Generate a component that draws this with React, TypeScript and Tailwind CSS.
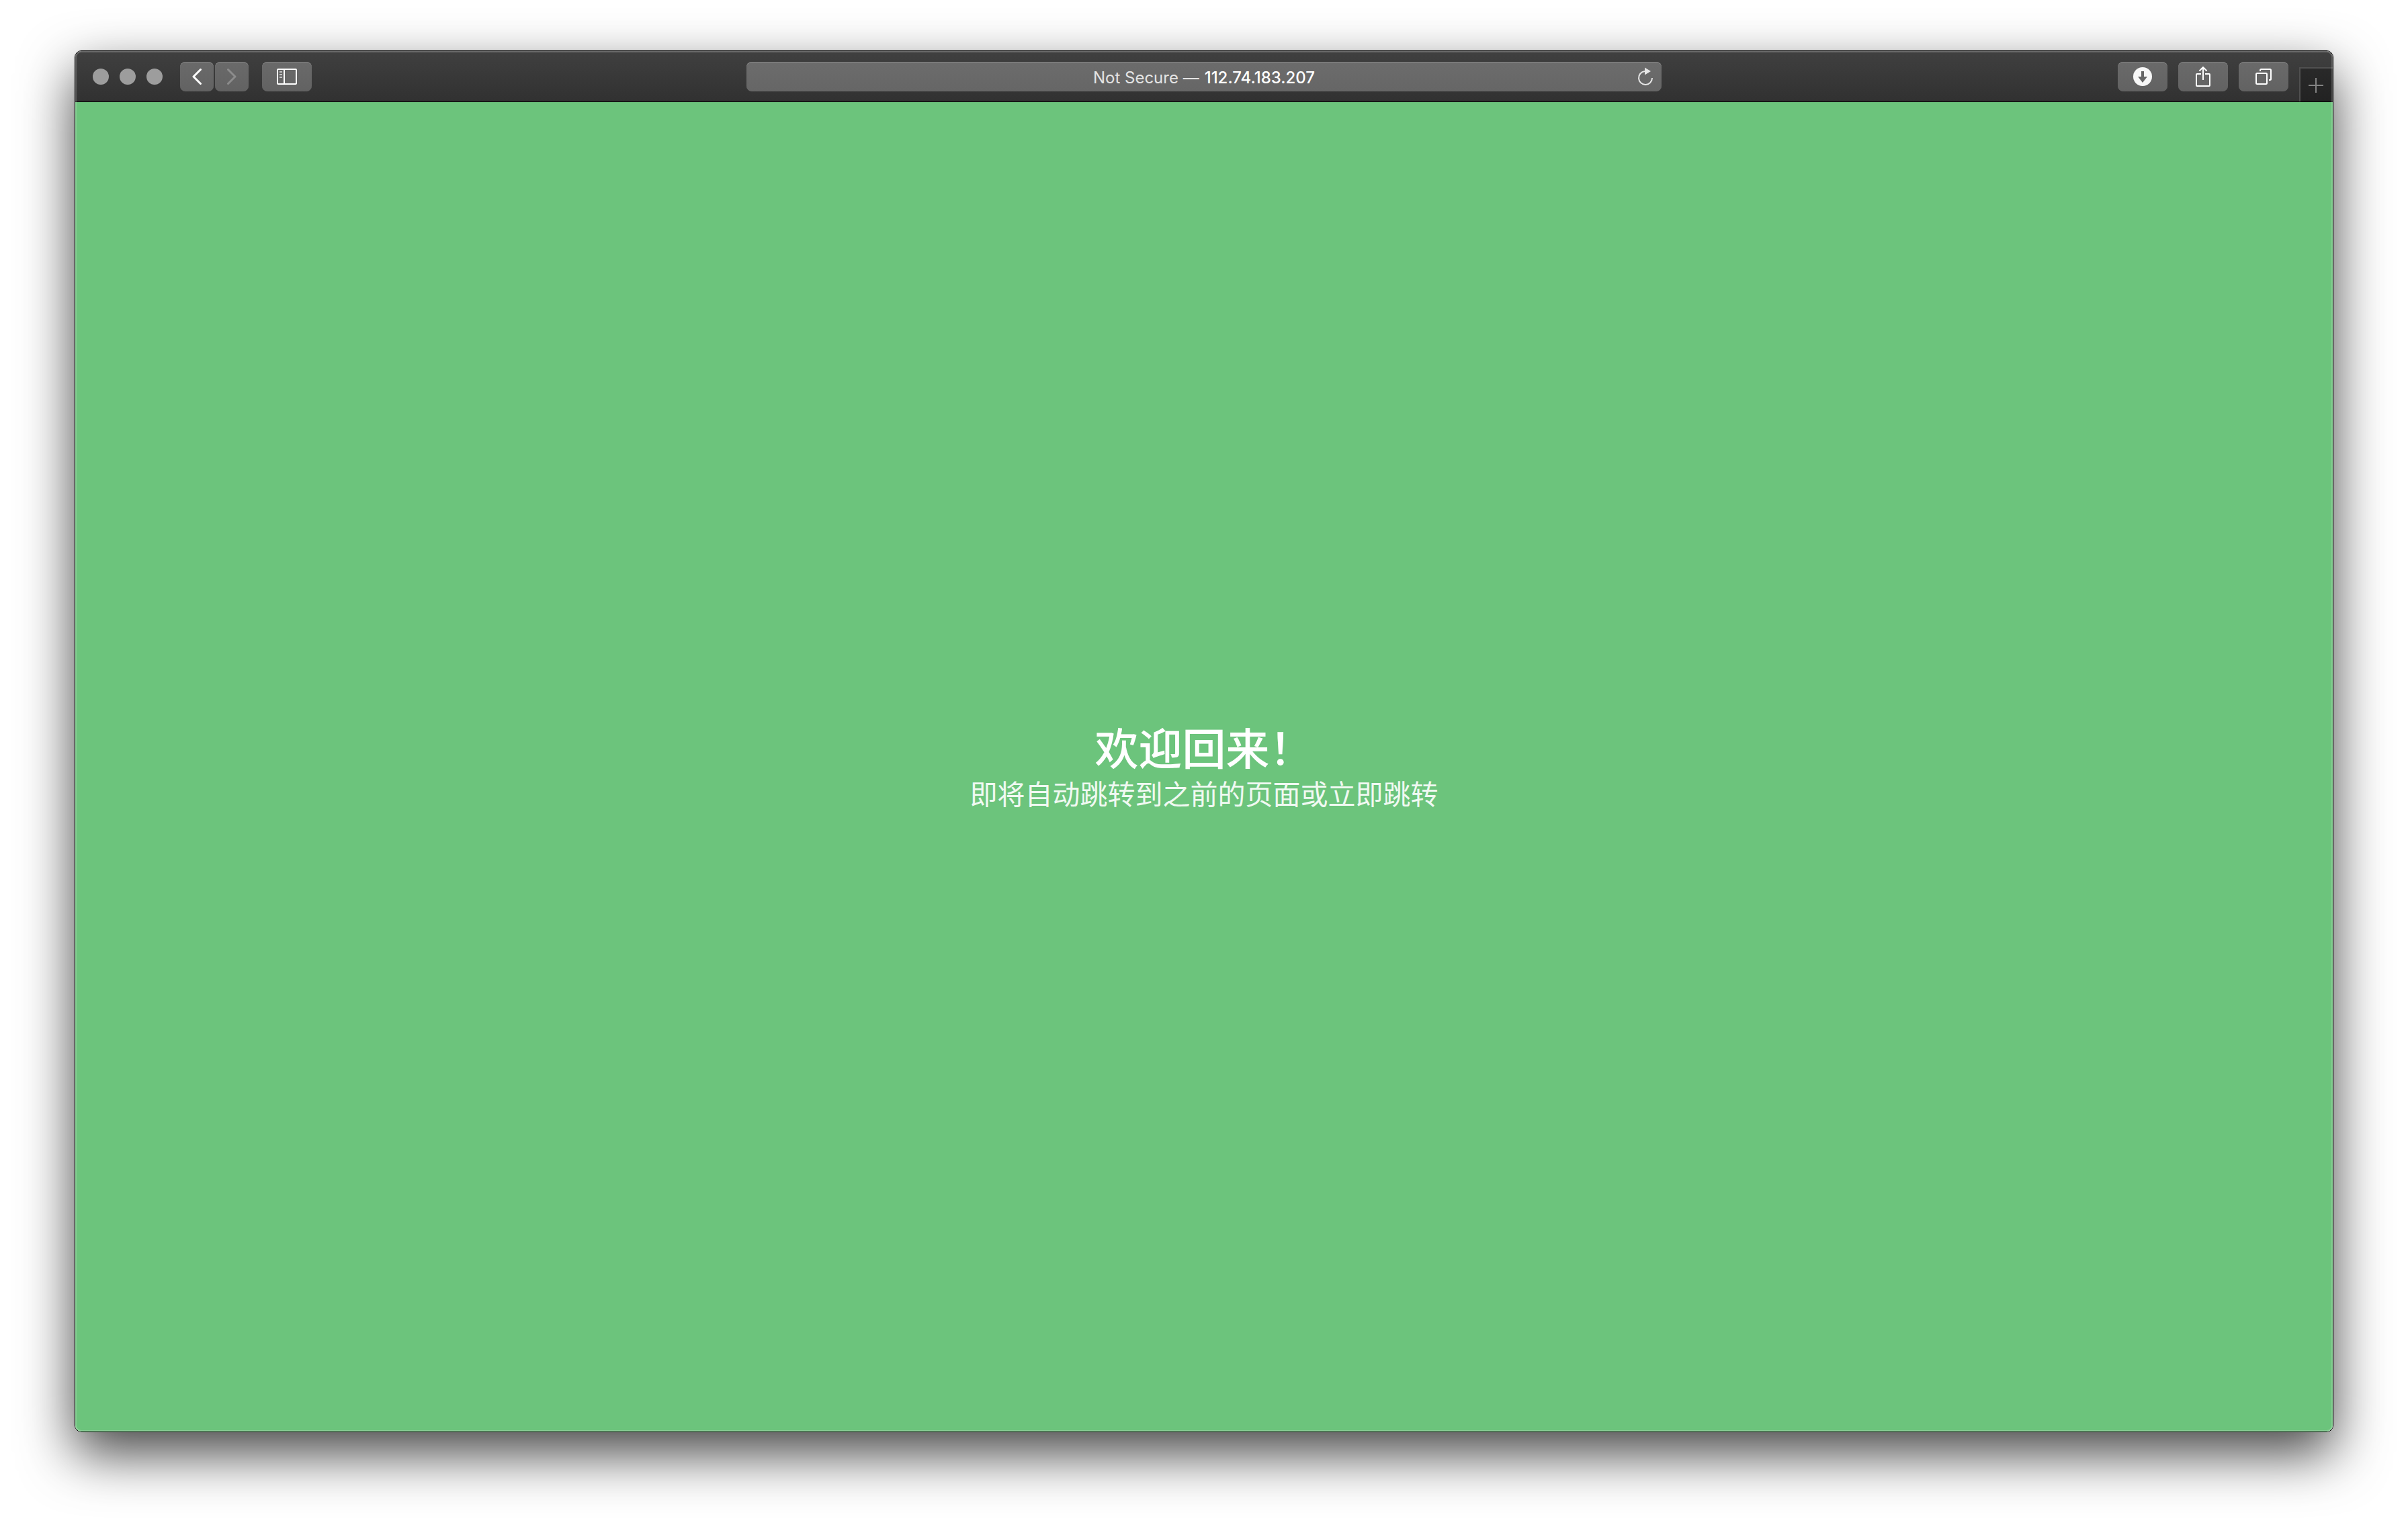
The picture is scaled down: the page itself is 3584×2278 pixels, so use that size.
import type { ReactNode } from "react";

const face =
  "flex h-11 items-center justify-center rounded-[8px] bg-linear-to-b from-[#6a6a6a] to-[#626262] shadow-[inset_0_1px_0_#828282]";

function ToolButton({ label, wide, disabled, children }: { label: string; wide?: boolean; disabled?: boolean; children: ReactNode }) {
  return (
    <button type="button" aria-label={label} disabled={disabled} className={`${face} ${wide ? "w-[74px]" : "w-[50px]"}`}>
      {children}
    </button>
  );
}

function TrafficLights() {
  return (
    <div className="flex gap-4">
      {["Close", "Minimize", "Zoom"].map((name) => (
        <button key={name} type="button" aria-label={name} className="size-6 rounded-full bg-[#9d9d9d]" />
      ))}
    </div>
  );
}

function AddressBar() {
  return (
    <form className="grid h-11 grid-cols-[1fr_auto_1fr] items-center rounded-[8px] bg-linear-to-b from-[#6c6c6c] to-[#666666] px-3 text-[24px] leading-8 shadow-[inset_0_1px_0_#888888]">
      <span />
      <div className="flex items-center gap-2 pt-1">
        <label htmlFor="address" className="text-[#e4e4e4]">
          Not Secure —
        </label>
        <input
          id="address"
          type="text"
          defaultValue="112.74.183.207"
          className="field-sizing-content bg-transparent font-medium text-white outline-none"
        />
      </div>
      <button type="button" aria-label="Reload" className="justify-self-end">
        <svg width="24" height="28" viewBox="0 0 24 28" fill="none">
          <path d="M11 6A10 10 0 1 0 22 16" stroke="#e6e6e6" strokeWidth="2" />
          <path d="M11 0.400V11.600L20 6Z" fill="#e6e6e6" />
        </svg>
      </button>
    </form>
  );
}

function Toolbar() {
  return (
    <header className="grid h-[76px] grid-cols-[999fr_1362fr_999fr] items-center border-b border-black bg-linear-to-b from-[#404040] to-[#313131]">
      <div className="flex items-center pl-[26px]">
        <TrafficLights />
        <div className="ml-[26px] flex gap-0.5">
          <ToolButton label="Back">
            <svg width="14" height="24" viewBox="0 0 14 24" fill="none" stroke="#fff" strokeWidth="3" strokeLinecap="round" strokeLinejoin="round">
              <path d="M12.5 1.5L2 12L12.5 22.5" />
            </svg>
          </ToolButton>
          <ToolButton label="Forward" disabled>
            <svg width="14" height="24" viewBox="0 0 14 24" fill="none" stroke="#8c8c8c" strokeWidth="3" strokeLinecap="round" strokeLinejoin="round">
              <path d="M1.5 1.5L12 12L1.5 22.5" />
            </svg>
          </ToolButton>
        </div>
        <div className="ml-5">
          <ToolButton label="Show sidebar" wide>
            <svg width="30" height="24" viewBox="0 0 30 24" fill="none" stroke="#fff" strokeWidth="2">
              <rect x="1" y="1" width="28" height="22" rx="1" />
              <path d="M11 1V23" />
              <path d="M4 5H8M4 9H8M4 13H8" stroke="#c4c4c4" />
            </svg>
          </ToolButton>
        </div>
      </div>
      <AddressBar />
      <div className="flex items-center justify-end gap-4 self-stretch">
        <ToolButton label="Downloads" wide>
          <svg width="28" height="28" viewBox="0 0 28 28">
            <circle cx="14" cy="14" r="14" fill="#f7f7f7" />
            <path d="M12 6H16V14H21L14 23L7 14H12Z" fill="#666" />
          </svg>
        </ToolButton>
        <ToolButton label="Share" wide>
          <svg width="22" height="32" viewBox="0 0 22 32" fill="none" stroke="#fff" strokeWidth="2">
            <path d="M8 12H2Q1 12 1 13V29Q1 30 2 30H20Q21 30 21 29V13Q21 12 20 12H14" />
            <path d="M11 21V2M5.5 7.5L11 2L16.5 7.5" strokeLinejoin="round" />
          </svg>
        </ToolButton>
        <ToolButton label="Show all tabs" wide>
          <svg width="24" height="24" viewBox="0 0 24 24" fill="none" stroke="#fff" strokeWidth="2">
            <rect x="1" y="7" width="16" height="16" rx="1.5" />
            <path d="M7 4V2.5Q7 1 8.5 1H21.5Q23 1 23 2.5V15.5Q23 17 21.5 17H20" />
          </svg>
        </ToolButton>
        <button
          type="button"
          aria-label="New tab"
          className="flex h-[51px] w-[50px] items-center justify-center self-end border-t-2 border-l-2 border-[#505050] bg-linear-to-b from-[#292929] to-[#222222] pr-0.5"
        >
          <svg width="22" height="22" viewBox="0 0 22 22" stroke="#838383" strokeWidth="2">
            <path d="M11 0V22M0 11H22" />
          </svg>
        </button>
      </div>
    </header>
  );
}

export default function App() {
  return (
    <div className="flex min-h-screen flex-col overflow-hidden bg-white px-[111px] pt-[75px] pb-[147px] font-['Inter','Noto_Sans_CJK_SC',sans-serif]">
      <div className="relative flex flex-1 flex-col rounded-[10px] border border-black shadow-[0_32px_80px_rgba(0,0,0,0.73)]">
        <div className="flex flex-1 flex-col overflow-hidden rounded-[9px]">
          <Toolbar />
          <main className="flex flex-1 flex-col items-center justify-center bg-[#6cc47c] pb-1 text-center font-['Noto_Sans_CJK_SC',sans-serif] text-white">
            <h1 className="text-[65px] leading-20 font-medium">欢迎回来！</h1>
            <p className="text-[41px] leading-[58px] font-normal text-white/90">
              即将自动跳转到之前的页面或<a href="#">立即跳转</a>
            </p>
          </main>
        </div>
        <div className="pointer-events-none absolute inset-0 rounded-[9px] shadow-[inset_0_0_0_2px_rgba(255,255,255,0.2)]" />
      </div>
    </div>
  );
}
